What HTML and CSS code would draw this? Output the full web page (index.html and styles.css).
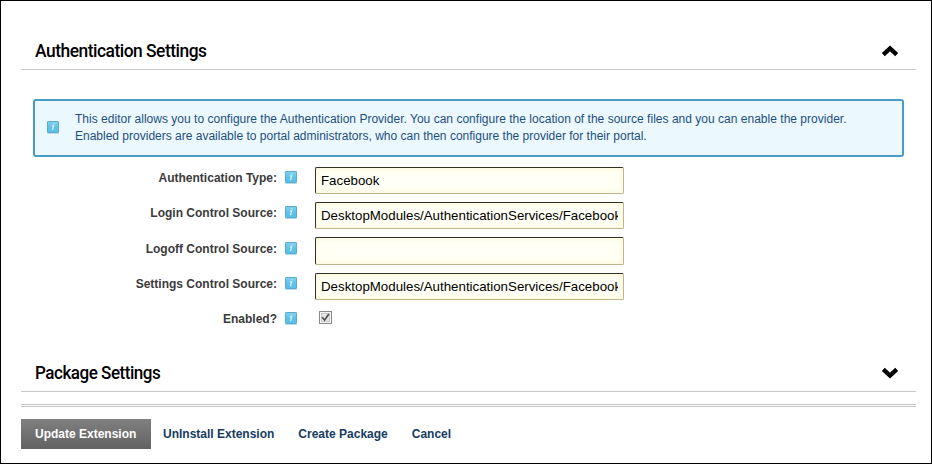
FILE: index.html
```html
<!DOCTYPE html>
<html lang="en">
<head>
<meta charset="utf-8">
<title>Authentication Settings</title>
<link rel="stylesheet" href="styles.css">
</head>
<body>
<svg width="0" height="0" class="defs">
  <defs>
    <linearGradient id="blue" x1="0" y1="0" x2="0" y2="1"><stop offset="0" stop-color="#83d2ef"/><stop offset=".5" stop-color="#62c2e8"/><stop offset="1" stop-color="#58c0ea"/></linearGradient>
    <symbol id="info" viewBox="0 0 12 13"><rect x="0" y="0" width="12" height="13" rx="1" fill="#b9dced"/><rect x=".5" y=".5" width="11" height="11" rx=".7" fill="url(#blue)" stroke="#5ba9cd"/><path d="M4.8 4.9H6.6L5.5 9.2M7.1 2.3L6.9 3.3" fill="none" stroke="#d3f1fb" stroke-width="1.3"/></symbol>
  </defs>
</svg>
<main class="page">
  <section>
    <header class="section-head first"><h2 class="auth">Authentication Settings</h2><svg class="chevron" viewBox="0 0 18 12"><path d="M2.3 9.6L9 3.5L15.7 9.6" /></svg></header>
    <div class="message"><svg class="info"><use href="#info"/></svg><p><span class="line-a">This editor allows you to configure the Authentication Provider. You can configure the location of the source files and you can enable the provider.</span><br><span class="line-b">Enabled providers are available to portal administrators, who can then configure the provider for their portal.</span></p></div>
    <form class="form">
      <div class="row"><label for="type">Authentication Type:</label><svg class="info"><use href="#info"/></svg><input id="type" type="text" value="Facebook"></div>
      <div class="row"><label for="login">Login Control Source:</label><svg class="info"><use href="#info"/></svg><input id="login" type="text" value="DesktopModules/AuthenticationServices/Facebook/Login.ascx"></div>
      <div class="row tall"><label for="logoff">Logoff Control Source:</label><svg class="info"><use href="#info"/></svg><input id="logoff" type="text"></div>
      <div class="row"><label for="settings">Settings Control Source:</label><svg class="info"><use href="#info"/></svg><input id="settings" type="text" value="DesktopModules/AuthenticationServices/Facebook/Settings.ascx"></div>
      <div class="row"><label>Enabled?</label><svg class="info"><use href="#info"/></svg><svg class="check" viewBox="0 0 13 13"><rect x=".5" y=".5" width="12" height="12" fill="#f5f5f5" stroke="#8b8b8b"/><rect x="2.5" y="2.5" width="8" height="8" fill="#e7e7e7" stroke="#c9c9c9"/><path d="M3.3 6.2L5.6 9.2L9.8 3" fill="none" stroke="#4c4c4c" stroke-width="1.6"/></svg></div>
    </form>
  </section>
  <section>
    <header class="section-head"><h2 class="pack">Package Settings</h2><svg class="chevron" viewBox="0 0 18 12"><path d="M2.3 2.4L9 8.5L15.7 2.4"/></svg></header>
  </section>
  <footer class="actions"><a class="primary">Update Extension</a><a class="un">UnInstall Extension</a><a class="create">Create Package</a><a class="cancel">Cancel</a></footer>
</main>
</body>
</html>
```
FILE: styles.css
```css
* { box-sizing: border-box; }
body { margin: 0; background: #fff; font: 12px/17px "Liberation Sans", Arial, sans-serif; }
.defs { display: block; width: 0; height: 0; }
.page { width: 932px; height: 464px; border: 1px solid #000; padding: 0 15px 0 20px; overflow: hidden; }
.section-head { display: flex; justify-content: space-between; align-items: flex-start; height: 36px; border-bottom: 1px solid #c9c9c9; padding: 5px 17px 0 14px; }
.first { margin-top: 33px; }
h2 { margin: 0; font: 500 18px/24px Roboto, sans-serif; color: #000; white-space: nowrap; transform-origin: left; }
.auth { letter-spacing: -.5px; transform: scaleX(.966); }
.pack { letter-spacing: -.5px; transform: scaleX(.945); }
.chevron { width: 18px; height: 12px; margin-top: 6px; }
.chevron path { fill: none; stroke: #000; stroke-width: 4.3; }
.message { display: flex; align-items: center; height: 58px; margin: 29px 12px 0; padding: 0 12px; border: 2px solid #4a9cc2; border-radius: 3px; background: #ebf8fe; color: #1f4f80; }
.message p { margin: 0 0 0 16px; white-space: nowrap; }
.message .info { margin-top: -1px; }
.line-a { letter-spacing: .016px; }
.info { width: 12px; height: 13px; flex: none; }
.form { padding-top: 10px; height: 199px; }
.row { display: flex; align-items: flex-start; height: 35px; }
.row.tall { height: 36px; }
.row label { width: 256px; padding-top: 3px; text-align: right; font-weight: bold; color: #3b3b3b; white-space: nowrap; }
.row.tall label { padding-top: 4px; }
.row .info { margin: 4px 18px 0 8px; }
.row.tall .info { margin-top: 5px; }
.row input { width: 309px; height: 27px; padding: 0 5px; border: 1px solid; border-color: #33301f #bdb58c #bdb58c #33301f; border-radius: 2px; background: #fffff5; box-shadow: inset 0 0 6px #faf5ce; font: 13.3px "Liberation Sans", Arial, sans-serif; color: #000; }
.row.tall input { height: 28px; }
.check { width: 13px; height: 13px; margin: 3px 0 0 4px; }
.actions { display: flex; align-items: center; margin-top: 12px; border-top: 3px double #c3c3c3; padding-top: 12px; font-weight: bold; color: #173a63; white-space: nowrap; }
.primary { width: 130px; height: 30px; line-height: 30px; padding-left: 14px; color: #fff; background: linear-gradient(#808080, #626262); margin-right: 12px; }
.un, .create { margin-right: 24px; }
```
